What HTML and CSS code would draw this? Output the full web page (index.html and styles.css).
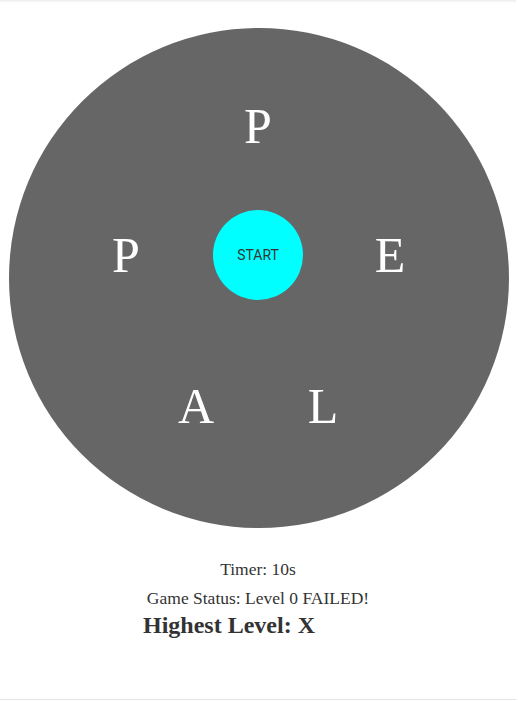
FILE: index.html
```html
<!DOCTYPE html>
<html lang="en">
<head>
    <meta charset="UTF-8">
    <meta name="viewport" content="width=device-width, initial-scale=1.0">
    <title>Letter Wheel</title>
    <link rel="stylesheet" href="styles.css">
</head>
<body>
    <div class="page">
        <!-- rueda de letras -->
        <div class="board">
            <span class="letter" style="left: 249px; top: 98px;">P</span>
            <span class="letter" style="left: 117px; top: 227px;">P</span>
            <span class="letter" style="left: 381px; top: 227px;">E</span>
            <span class="letter" style="left: 187px; top: 378px;">A</span>
            <span class="letter" style="left: 314px; top: 378px;">L</span>
            <button class="start-btn">START</button>
        </div>

        <div class="info">
            <p class="line">Timer: 10s</p>
            <p class="line">Game Status: Level 0 FAILED!</p>
            <h2 class="highest">Highest Level: X</h2>
        </div>
    </div>
</body>
</html>
```

FILE: styles.css
```css
body {
    margin: 0;
    font-family: "Liberation Serif", "Times New Roman", serif;
    color: #333;
    background-color: #fff;
}

.page {
    width: 516px;
    height: 700px;
    border-bottom: 1px solid #e4e4e4;
    box-shadow: inset 0 3px 3px -2px rgba(0,0,0,0.1); /* sombra arriba */
    padding-top: 28px;
    box-sizing: border-box;
}

.board {
    position: relative;
    width: 500px;
    height: 500px;
    margin-left: 9px;
    border-radius: 50%;
    background-color: #666;
}

.letter {
    position: absolute;
    transform: translate(-50%, -50%);
    font-size: 50px;
    line-height: 1;
    color: #fff;
}

.start-btn {
    position: absolute;
    left: 204px;
    top: 182px;
    width: 90px;
    height: 90px;
    border: none;
    border-radius: 50%;
    background-color: #00ffff;
    color: #333;
    font-family: Roboto, "Liberation Sans", sans-serif;
    font-size: 14px;
    padding: 0;
    cursor: pointer;
}

.info {
    padding-top: 27px;
    text-align: center;
}

.line {
    margin: 0;
    font-size: 17.5px;
    line-height: 29px;
}

.highest {
    margin: 0;
    text-align: left;
    padding-left: 143px;
    font-size: 24px;
    line-height: 25px;
    font-weight: bold;
}
```
